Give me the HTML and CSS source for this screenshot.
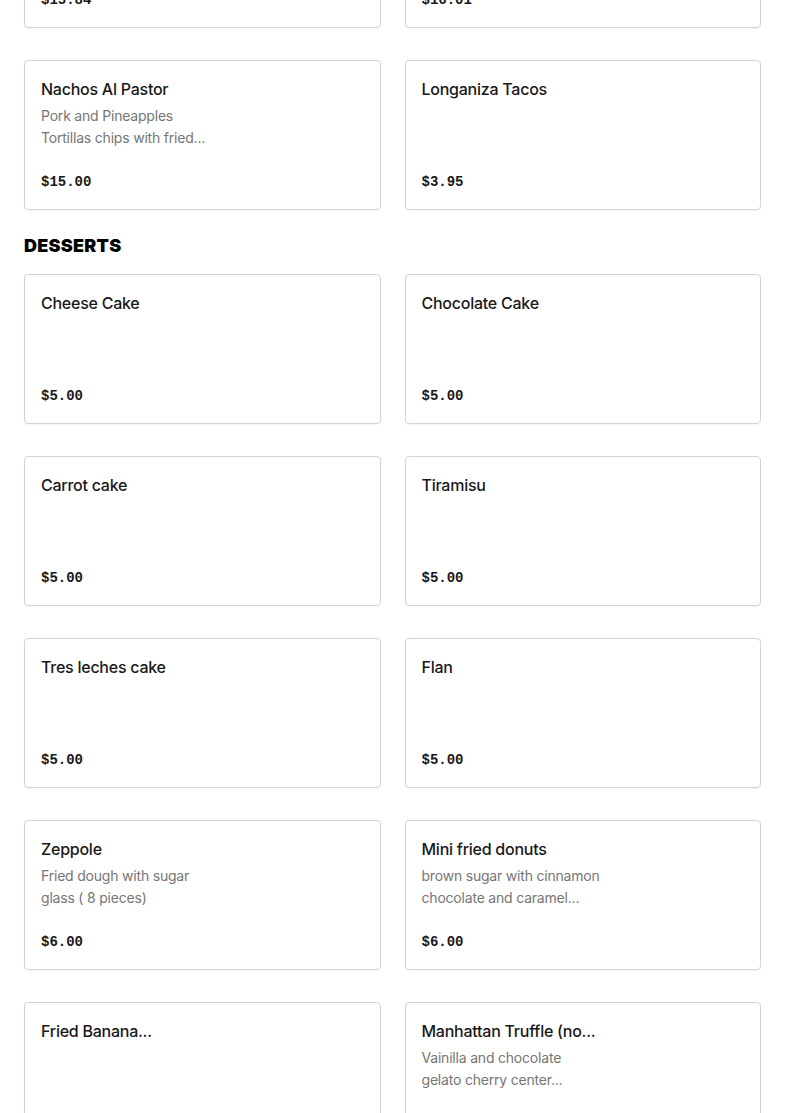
FILE: index.html
```html
<!DOCTYPE html>
<html lang="en">
<head>
<meta charset="utf-8">
<title>Menu</title>
<link rel="stylesheet" href="styles.css">
</head>
<body>
<main class="menu">
  <section class="section section-first">
    <div class="grid">
      <div class="card"><div class="price">$15.84</div></div>
      <div class="card"><div class="price">$16.01</div></div>
      <div class="card"><div class="title">Nachos Al Pastor</div><div class="desc">Pork and Pineapples<br>Tortillas chips with fried...</div><div class="price">$15.00</div></div>
      <div class="card"><div class="title">Longaniza Tacos</div><div class="price">$3.95</div></div>
    </div>
  </section>
  <section class="section">
    <h2 class="heading">DESSERTS</h2>
    <div class="grid">
      <div class="card"><div class="title">Cheese Cake</div><div class="price">$5.00</div></div>
      <div class="card"><div class="title">Chocolate Cake</div><div class="price">$5.00</div></div>
      <div class="card"><div class="title">Carrot cake</div><div class="price">$5.00</div></div>
      <div class="card"><div class="title">Tiramisu</div><div class="price">$5.00</div></div>
      <div class="card"><div class="title">Tres leches cake</div><div class="price">$5.00</div></div>
      <div class="card"><div class="title">Flan</div><div class="price">$5.00</div></div>
      <div class="card"><div class="title">Zeppole</div><div class="desc">Fried dough with sugar<br>glass ( 8 pieces)</div><div class="price">$6.00</div></div>
      <div class="card"><div class="title">Mini fried donuts</div><div class="desc">brown sugar with cinnamon<br>chocolate and caramel...</div><div class="price">$6.00</div></div>
      <div class="card"><div class="title">Fried Banana...</div><div class="price">$6.00</div></div>
      <div class="card"><div class="title">Manhattan Truffle (no...</div><div class="desc">Vainilla and chocolate<br>gelato cherry center...</div><div class="price">$6.00</div></div>
    </div>
  </section>
</main>
</body>
</html>
```
FILE: styles.css
```css
html, body {
  margin: 0;
  padding: 0;
  background: #ffffff;
}
body {
  font-family: "Inter", "Liberation Sans", sans-serif;
  color: #191919;
  overflow: hidden;
}
.menu {
  padding: 0 24px;
  margin-top: -122px;
}
.section {
  margin-top: 24px;
}
.section-first {
  margin-top: 0;
}
.heading {
  margin: 0 0 16px;
  font-size: 18px;
  line-height: 24px;
  font-weight: 900;
  letter-spacing: 0.25px;
  color: #000;
}
.grid {
  display: grid;
  grid-template-columns: 1fr 1fr;
  column-gap: 24px;
  row-gap: 32px;
}
.card {
  box-sizing: border-box;
  height: 150px;
  border: 1px solid #d3d3d3;
  border-radius: 4px;
  padding: 16px;
  display: flex;
  flex-direction: column;
  box-shadow: 0 1px 1px rgba(0,0,0,0.04);
}
.title {
  font-size: 16px;
  line-height: 24px;
  font-weight: 500;
  letter-spacing: -0.25px;
  color: #191919;
  white-space: nowrap;
}
.desc {
  margin-top: 4px;
  font-size: 14px;
  line-height: 22px;
  letter-spacing: -0.2px;
  color: #767676;
}
.price {
  margin-top: auto;
  font-family: "Liberation Mono", monospace;
  font-weight: 700;
  font-size: 14px;
  line-height: 22px;
  color: #191919;
}
```
